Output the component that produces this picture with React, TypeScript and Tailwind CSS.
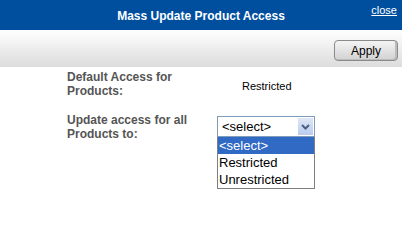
import React from 'react';

const options = ['<select>', 'Restricted', 'Unrestricted'];

export default function App() {
  return (
    <div className="w-[402px] h-[252px] bg-white font-['Liberation_Sans',Arial,sans-serif] overflow-hidden">
      {/* title bar */}
      <div className="relative h-[30px] bg-[#004f9f] flex items-center justify-center">
        <span className="text-white text-[12px] font-bold pt-[2px]">Mass Update Product Access</span>
        <a className="absolute right-[5px] top-[2px] text-white text-[11px] underline">close</a>
      </div>

      {/* toolbar */}
      <div className="h-[37px] bg-gradient-to-b from-white to-[#dcdcdc] flex items-center justify-end pr-[4px] pt-[4px]">
        <button className="w-[64px] h-[21px] rounded-[4px] border border-[#8a8a8a] bg-gradient-to-b from-[#f4f4f4] to-[#d2d2d2] text-[12px] text-black shadow-[inset_-2px_-1px_0_#bdbdbd]">
          Apply
        </button>
      </div>

      {/* form */}
      <div className="pl-[67px] pt-[3px] text-[12px]">
        <div className="flex">
          <div className="w-[150px] font-bold text-[#555] leading-[14px]">
            Default Access for
            <br />
            Products:
          </div>
          <div className="pt-[8px] pl-[25px] text-[11px] text-black">Restricted</div>
        </div>

        <div className="flex mt-[15px]">
          <div className="w-[150px] font-bold text-[#555] leading-[14px]">
            Update access for all
            <br />
            Products to:
          </div>
          <div className="pt-[3px]">
            <div className="w-[98px] h-[21px] border border-[#7f9db9] flex items-center justify-between bg-white">
              <span className="pl-[4px] text-[13px] text-black leading-none">&lt;select&gt;</span>
              <span className="w-[15px] h-[17px] mr-[1px] bg-gradient-to-b from-[#dfe7f7] to-[#b9cbee] flex items-center justify-center">
                <svg width="9" height="6" viewBox="0 0 9 6">
                  <path d="M1 1 L4.5 4.5 L8 1" stroke="#4d6185" strokeWidth="2" fill="none" />
                </svg>
              </span>
            </div>
            <div className="w-[98px] border border-[#7f7f7f] border-t-0 bg-white text-[13px] leading-[17px]">
              {options.map((o, i) => (
                <div
                  key={o}
                  className={i === 0 ? 'bg-[#316ac5] text-white pl-[1px]' : 'text-black pl-[1px]'}
                >
                  {o}
                </div>
              ))}
            </div>
          </div>
        </div>
      </div>
    </div>
  );
}
